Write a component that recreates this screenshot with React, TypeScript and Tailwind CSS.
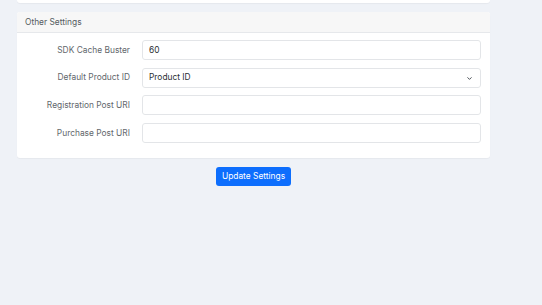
import * as React from "react";
import { ChevronDown } from "lucide-react";

const rows: { label: string; value?: string; select?: boolean }[] = [
  { label: "SDK Cache Buster", value: "60" },
  { label: "Default Product ID", value: "Product ID", select: true },
  { label: "Registration Post URI" },
  { label: "Purchase Post URI" },
];

export default function App() {
  return (
    <div
      className="h-[305px] w-[542px] overflow-hidden bg-[#eff2f7] text-[8.4px] text-[#212529]"
      style={{ fontFamily: "Inter, 'Noto Sans', sans-serif" }}
    >
      <div className="ml-[17px] w-[473px]">
        {/* tail of previous card */}
        <div className="h-[3px] rounded-b-[3px] bg-white shadow-[0_1px_1px_rgba(0,0,0,0.04)]" />

        <section className="mt-[9px] overflow-hidden rounded-[3px] bg-white shadow-[0_1px_1px_rgba(0,0,0,0.04)]">
          <header className="flex h-[21px] items-center border-b border-[#e6e8eb] bg-[#f7f7f7] px-[8px] text-[#555b61]">
            Other Settings
          </header>
          <div className="flex flex-col gap-[7.7px] pb-[15px] pl-0 pr-[9px] pt-[7px]">
            {rows.map((r) => (
              <div key={r.label} className="flex items-center">
                <label className="w-[125px] shrink-0 pr-[12px] text-right text-[#62676c]">{r.label}</label>
                <div className="relative flex h-[20px] flex-1 items-center rounded-[3px] border border-[#e3e5e8] bg-white px-[6px] text-[#2b2f33]">
                  {r.value ?? ""}
                  {r.select ? (
                    <ChevronDown className="absolute right-[7px] top-[6px] h-[7px] w-[7px] text-[#343a40]" strokeWidth={3} />
                  ) : null}
                </div>
              </div>
            ))}
          </div>
        </section>

        <div className="mt-[9px] flex justify-center">
          <button
            type="button"
            className="h-[19px] w-[75px] rounded-[3px] bg-[#0d6efd] text-[8.4px] text-white"
          >
            Update Settings
          </button>
        </div>
      </div>
    </div>
  );
}
